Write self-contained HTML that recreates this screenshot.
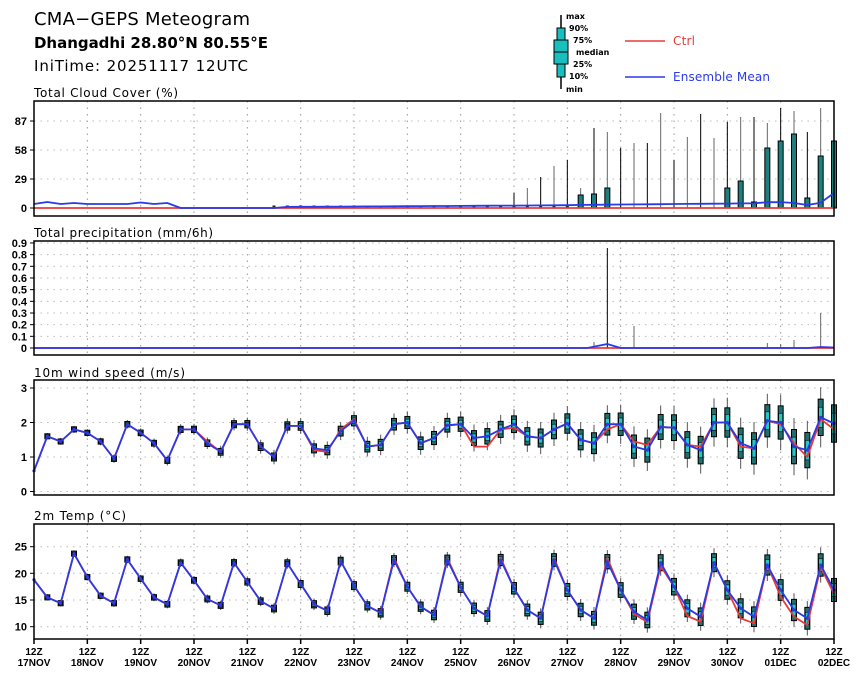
<!DOCTYPE html>
<html><head><meta charset="utf-8"><style>
html,body{margin:0;padding:0;background:#fff;width:860px;height:677px;overflow:hidden}
svg{display:block;font-family:"DejaVu Sans","Liberation Sans",sans-serif}
</style></head><body>
<svg id="s" width="860" height="677" viewBox="0 0 860 677" xmlns="http://www.w3.org/2000/svg">
<text x="34" y="25" font-size="18" fill="#000" textLength="216" lengthAdjust="spacing">CMA−GEPS Meteogram</text>
<text x="34" y="48" font-size="15" font-weight="bold" fill="#000" textLength="234" lengthAdjust="spacing">Dhangadhi 28.80°N 80.55°E</text>
<text x="34" y="71" font-size="15" fill="#000" textLength="214" lengthAdjust="spacing">IniTime: 20251117 12UTC</text>
<g font-size="8" font-weight="bold" fill="#000">
<line x1="561" y1="15" x2="561" y2="89" stroke="#000" stroke-width="1.5"/>
<rect x="557" y="28" width="8" height="49" fill="#19bfbf" stroke="#000"/>
<rect x="554" y="40" width="14" height="24" fill="#19bfbf" stroke="#000"/>
<line x1="554" y1="52" x2="568" y2="52" stroke="#000"/>
<text x="566" y="19">max</text><text x="569" y="31">90%</text><text x="573" y="43">75%</text>
<text x="576" y="55">median</text><text x="573" y="67">25%</text><text x="569" y="79">10%</text><text x="566" y="92">min</text>
</g>
<line x1="625" y1="41" x2="665" y2="41" stroke="#e83a3a" stroke-width="1.5"/>
<text x="673" y="45" font-size="12" fill="#e83a3a" textLength="22" lengthAdjust="spacing">Ctrl</text>
<line x1="625" y1="77" x2="665" y2="77" stroke="#2a3ae8" stroke-width="1.5"/>
<text x="673" y="81" font-size="12" fill="#2a3ae8" textLength="97" lengthAdjust="spacing">Ensemble Mean</text>
<g font-size="12" fill="#000">
<text x="34" y="97" textLength="144" lengthAdjust="spacing">Total Cloud Cover (%)</text>
<text x="34" y="237" textLength="179" lengthAdjust="spacing">Total precipitation (mm/6h)</text>
<text x="34" y="377" textLength="151" lengthAdjust="spacing">10m wind speed (m/s)</text>
<text x="34" y="520" textLength="92" lengthAdjust="spacing">2m Temp (°C)</text>
</g>
<g id="g"></g>
</svg>
<script>
var NS="http://www.w3.org/2000/svg",G=document.getElementById('g');
function el(t,a,txt){var e=document.createElementNS(NS,t);for(var k in a)e.setAttribute(k,a[k]);if(txt!=null)e.textContent=txt;G.appendChild(e);return e;}
function X(i){return 34+i*800/60;}
var panels=[[101,216],[241,355],[380,495],[524,639]];
panels.forEach(function(p){for(var d=1;d<15;d++){var x=34+d*800/15;el('line',{x1:x,y1:p[0],x2:x,y2:p[1],stroke:'#999','stroke-width':1,'stroke-dasharray':'1.5,5'});}});
function ylab(p,vals){vals.forEach(function(v){el('line',{x1:34,y1:v[1],x2:834,y2:v[1],stroke:'#bbb','stroke-width':1,'stroke-dasharray':'1.5,5'});el('line',{x1:30,y1:v[1],x2:34,y2:v[1],stroke:'#000'});el('text',{x:27,y:v[1]+4,'font-size':11,'font-weight':'bold','text-anchor':'end','font-family':'Liberation Sans'},v[0]);});}
ylab(0,[['87',121],['58',150],['29',179],['0',208]]);
var pv=[];for(var k=0;k<=9;k++)pv.push([k==0?'0':'0.'+k,348-k*11.67]);ylab(1,pv);
ylab(2,[['3',388],['2',422.5],['1',457],['0',491.5]]);
ylab(3,[['25',546.7],['20',573.3],['15',600],['10',626.7]]);
var wv=[0.6,1.6,1.45,1.8,1.7,1.45,0.95,1.95,1.7,1.4,0.9,1.8,1.8,1.4,1.15,1.95,1.95,1.3,1.0,1.9,1.9,1.25,1.2,1.75,2.05,1.3,1.35,1.95,2.0,
1.4,1.55,1.92,1.95,1.55,1.6,1.8,1.95,1.6,1.55,1.8,1.97,1.5,1.4,1.95,1.95,1.3,1.2,1.87,1.85,1.35,1.2,2.0,2.0,1.4,1.25,2.05,2.0,1.3,1.2,2.15,1.97];
var wc=wv.slice();var wcd={33:1.3,34:1.3,36:1.85,43:1.8,45:1.45,46:1.35,50:1.3,53:1.3,56:1.95,57:1.4,58:1.0,59:2.1,60:1.8,21:1.2,22:1.15,13:1.45,23:1.8,24:2.1};for(var k in wcd)wc[k]=wcd[k];
var tv=[18.8,15.5,14.4,23.7,19.3,15.8,14.4,22.6,19.0,15.5,14.2,22.0,18.7,15.2,14.0,22.0,18.4,14.8,13.4,21.9,18.0,14.2,13.0,22.3,17.7,13.9,12.6,22.5,17.5];
var ty2=[606.7,615,560,587.3,608.3,616,560,588.3,610,618.3,560,590,610,618.3,561.7,590,611.7,620,562.7,586.7,608.3,616.7,562.7,590,608.3,616.7,565,590,610,618.3,565,590];
var TY=function(v){return 546.7+(25-v)*5.333;};
var ty=tv.map(TY).concat(ty2);
var tc=ty.slice();var tcd={39:558,43:558,49:616,50:621.7,53:618.3,54:623.3,56:596.7,57:616.7,58:625,27:558,31:558,35:558,45:614,46:622,47:566,59:567,60:594};for(var k in tcd)tc[k]=tcd[k];
var WY=function(v){return 491.5-v*34.5;};
function box(x,y,a,wh,dark){
 el('line',{x1:x,y1:y-wh,x2:x,y2:y+wh,stroke:'#555','stroke-width':1});
 el('rect',{x:x-2.5,y:y-a*1.8,width:5,height:a*3.6,fill:'#1f6f6f',stroke:'#000','stroke-width':1});
 el('rect',{x:x-2,y:y-a,width:4,height:a*2,fill:dark?'#222':'#22c8c8',stroke:'#000','stroke-width':0.6});
}
for(var i=1;i<=60;i++){var f=i/60;var a=1.4+f*f*9;var wh=a*2.2+f*8;box(X(i),WY(wv[i]),a,wh,i<20);}
for(var i=1;i<=60;i++){var f=i/60;var a=1.4+f*f*5;var wh=a*2.2+f*4;box(X(i),ty[i],a,wh,i<20);}
function line(pts,c){el('polyline',{points:pts.map(function(p){return p[0].toFixed(1)+','+p[1].toFixed(1)}).join(' '),fill:'none',stroke:c,'stroke-width':1.8,'stroke-linejoin':'round'});}
function dots(ys,n0){for(var i=n0;i<=60;i++)el('circle',{cx:X(i),cy:ys[i],r:1.6,fill:'#2a3ae8'});}
line(wc.map(function(v,i){return [X(i),WY(v)]}),'#e83a3a');
line(wv.map(function(v,i){return [X(i),WY(v)]}),'#2a3ae8');dots(wv.map(WY),0);
line(tc.map(function(v,i){return [X(i),v]}),'#e83a3a');
line(ty.map(function(v,i){return [X(i),v]}),'#2a3ae8');dots(ty,0);
var cw={36:193,37:188,38:177,39:166,40:160,41:188,42:128,43:132,44:148,45:143,46:143,47:113,48:160,49:137,50:114,51:138,52:122,53:117,54:117,55:123,56:108,57:111,58:132,59:108,60:141};
var cb={41:195,42:194,43:188,52:188,53:181,54:202,55:148,56:141,57:134,58:198,59:156,60:141};
for(var k in cw){var x=X(+k);el('line',{x1:x,y1:cw[k],x2:x,y2:208,stroke:(k%2?'#666':'#000'),'stroke-width':1});}
for(var k in cb){var x=X(+k);el('rect',{x:x-2.5,y:cb[k],width:5,height:208-cb[k],fill:'#1f7f7f',stroke:'#000','stroke-width':1});}
for(var i=18;i<=40;i+=1){el('rect',{x:X(i)-1.5,y:205.5,width:3,height:2.5,fill:'#222'});}
el('line',{x1:34,y1:208,x2:834,y2:208,stroke:'#e83a3a','stroke-width':1.8});
var cm=[];for(var i=0;i<=60;i++){var y=206;if(i<11)y=205-(i==1?3:i==3?2:i==8?2.5:i==10?2:1);if(i>=11&&i<=18)y=208;if(i>18)y=207-(i-18)*0.08;if(i>40)y=205-(i-40)*0.12;if(i==55||i==56)y-=1;if(i==58)y=205;if(i==60)y=193;cm.push([X(i),y]);}
line(cm,'#2a3ae8');
var ps={42:342,43:248,45:326,55:343,56:344,57:340,59:313};
for(var k in ps){var x=X(+k);el('line',{x1:x,y1:ps[k],x2:x,y2:348,stroke:(k==43?'#000':'#666'),'stroke-width':1});}
el('line',{x1:34,y1:348,x2:834,y2:348,stroke:'#e83a3a','stroke-width':1.8});
line([[34,348],[X(41.5),348],[X(43),344],[X(44),348],[X(58),348],[X(59),347],[834,347.5]],'#2a3ae8');
panels.forEach(function(p){el('rect',{x:34,y:p[0],width:800,height:p[1]-p[0],fill:'none',stroke:'#000','stroke-width':1.5});});
var dd=['17NOV','18NOV','19NOV','20NOV','21NOV','22NOV','23NOV','24NOV','25NOV','26NOV','27NOV','28NOV','29NOV','30NOV','01DEC','02DEC'];
dd.forEach(function(d,k){var x=34+k*800/15;el('line',{x1:x,y1:639,x2:x,y2:644,stroke:'#000','stroke-width':1.5});
el('text',{x:x,y:655,'font-size':10,'font-weight':'bold','text-anchor':'middle','font-family':'Liberation Sans'},'12Z');
el('text',{x:x,y:666,'font-size':10,'font-weight':'bold','text-anchor':'middle','font-family':'Liberation Sans'},d);});
</script>
</body></html>
